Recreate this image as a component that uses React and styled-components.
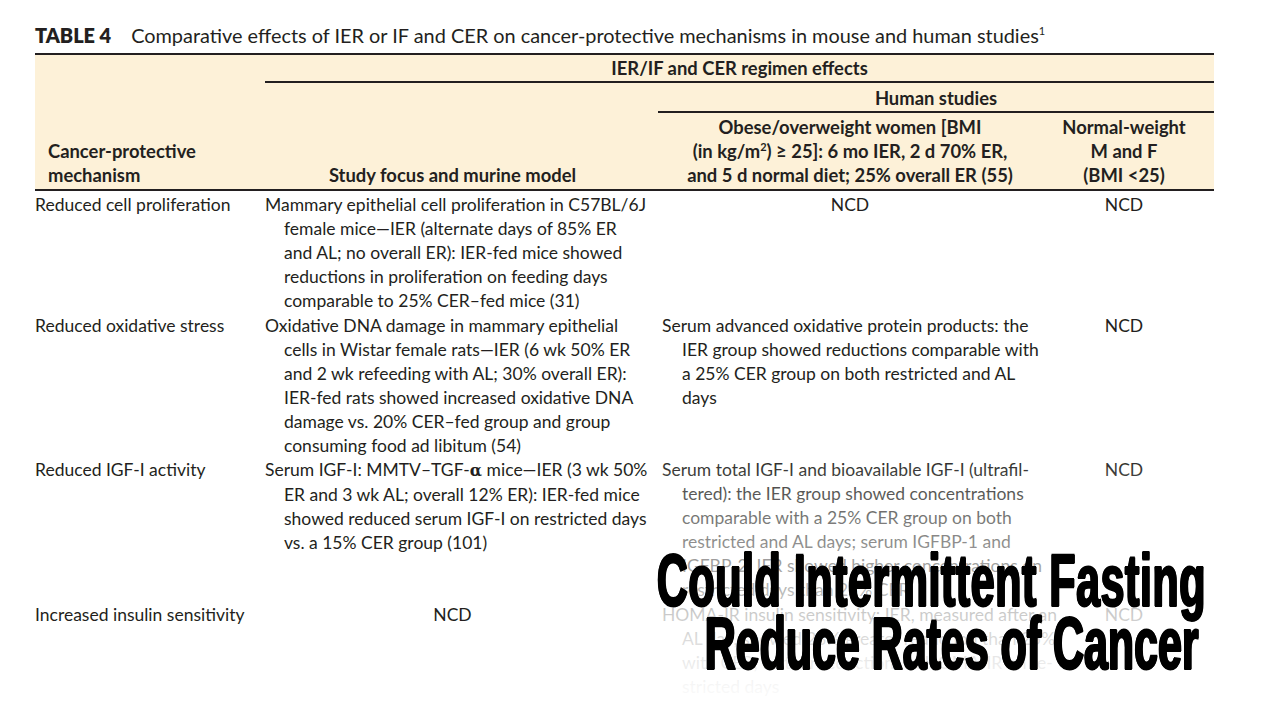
import React from 'react';
import styled, { createGlobalStyle } from 'styled-components';

const GlobalStyle = createGlobalStyle`
  html, body {
    margin: 0;
    padding: 0;
    background: #ffffff;
  }
  body {
    font-family: Lato, "Open Sans", sans-serif;
    color: #231f20;
  }
`;

const Page = styled.div`
  position: relative;
  width: 1280px;
  height: 720px;
  overflow: hidden;
  padding: 23px 0 0 35px;
  box-sizing: border-box;
`;

const Caption = styled.div`
  font-size: 19.9px;
  line-height: 24px;
  margin-bottom: 6px;
  white-space: nowrap;
`;

const CaptionLabel = styled.b`
  font-weight: 800;
  margin-right: 20px;
`;

const Sup = styled.sup`
  font-size: 11px;
  line-height: 0;
`;

const Table = styled.table`
  border-collapse: separate;
  border-spacing: 0;
  table-layout: fixed;
  width: 1179px;
  font-size: 17.5px;
  line-height: 24px;
`;

const HeadCell = styled.th`
  background: #fdf1d8;
  font-weight: 700;
  font-size: 18.4px;
  vertical-align: bottom;
  text-align: ${p => p.$align || 'center'};
  padding: ${p => p.$pad || '2px 2px 2px 0'};
  border-top: ${p => (p.$top ? '2px solid #231f20' : 'none')};
  border-bottom: ${p => (p.$bottom ? '2px solid #231f20' : 'none')};
  white-space: nowrap;
`;

const GroupLabel = styled.div`
  margin-left: ${p => p.$inset || 0}px;
  padding: ${p => p.$pad};
  border-bottom: 2px solid #231f20;
  text-align: center;
`;

const BodyCell = styled.td`
  vertical-align: top;
  text-align: ${p => p.$align || 'left'};
  padding: ${p => p.$pad || '0'};
`;

const Line = styled.span`
  display: block;
  white-space: nowrap;
  padding-left: ${p => (p.$indent ? p.$indent : 0)}px;
`;

const Alpha = styled.span`
  font-family: "DejaVu Serif", serif;
  font-weight: 700;
  font-size: 16px;
`;

const Veil = styled.div`
  position: absolute;
  left: 648px;
  right: 0;
  top: 450px;
  bottom: 0;
  background: linear-gradient(
    to bottom,
    rgba(255, 255, 255, 0) 0px,
    rgba(255, 255, 255, 0.4) 70px,
    rgba(255, 255, 255, 0.72) 150px,
    rgba(255, 255, 255, 0.9) 210px,
    rgba(255, 255, 255, 0.97) 240px
  );
`;

const Headline = styled.div`
  position: absolute;
  left: 631px;
  width: 600px;
  top: 549px;
`;

const HeadlineRow = styled.div`
  display: flex;
  justify-content: center;
  margin-left: ${p => p.$shift || 0}px;
  height: 63px;
`;

const HeadlineText = styled.span`
  display: inline-block;
  font-family: "Liberation Sans", Arial, sans-serif;
  font-weight: 700;
  font-size: 74px;
  line-height: 63px;
  color: #000;
  white-space: nowrap;
  letter-spacing: ${p => (p.$ls !== undefined ? p.$ls : 1)}px;
  -webkit-text-stroke: 2px #000;
  text-shadow: 1.6px 0 0 #000, -1.6px 0 0 #000;
  transform: scaleX(0.58);
  transform-origin: center;
`;

const rows = [
  {
    mech: 'Reduced cell proliferation',
    murine: [
      'Mammary epithelial cell proliferation in C57BL/6J',
      'female mice—IER (alternate days of 85% ER',
      'and AL; no overall ER): IER-fed mice showed',
      'reductions in proliferation on feeding days',
      'comparable to 25% CER–fed mice (31)',
    ],
    obese: null,
    top: 2,
  },
  {
    mech: 'Reduced oxidative stress',
    murine: [
      'Oxidative DNA damage in mammary epithelial',
      'cells in Wistar female rats—IER (6 wk 50% ER',
      'and 2 wk refeeding with AL; 30% overall ER):',
      'IER-fed rats showed increased oxidative DNA',
      'damage vs. 20% CER–fed group and group',
      'consuming food ad libitum (54)',
    ],
    obese: [
      'Serum advanced oxidative protein products: the',
      'IER group showed reductions comparable with',
      'a 25% CER group on both restricted and AL',
      'days',
    ],
    top: 1,
  },
  {
    mech: 'Reduced IGF-I activity',
    murine: [
      <>Serum IGF-I: MMTV–TGF-<Alpha>α</Alpha> mice—IER (3 wk 50%</>,
      'ER and 3 wk AL; overall 12% ER): IER-fed mice',
      'showed reduced serum IGF-I on restricted days',
      'vs. a 15% CER group (101)',
    ],
    obese: [
      'Serum total IGF-I and bioavailable IGF-I (ultrafil-',
      'tered): the IER group showed concentrations',
      'comparable with a 25% CER group on both',
      'restricted and AL days; serum IGFBP-1 and',
      'IGFBP-2: IER showed higher concentrations on',
      'restricted days than 25% CER',
    ],
    top: 0,
  },
  {
    mech: 'Increased insulin sensitivity',
    murine: null,
    obese: [
      'HOMA-IR insulin sensitivity: IER, measured after an',
      'AL day, showed 23% greater reduction than 25%',
      'with CER; further reductions in HOMA-IR on re-',
      'stricted days',
    ],
    top: 1,
  },
];

const Lines = ({ lines, indent }) =>
  lines.map((l, i) => (
    <Line key={i} $indent={i > 0 ? indent : 0}>
      {l}
    </Line>
  ));

export default function App() {
  return (
    <>
      <GlobalStyle />
      <Page>
        <Caption>
          <CaptionLabel>TABLE 4</CaptionLabel>
          Comparative effects of IER or IF and CER on cancer-protective mechanisms in mouse and human studies
          <Sup>1</Sup>
        </Caption>

        <Table>
          <colgroup>
            <col style={{ width: 230 }} />
            <col style={{ width: 375 }} />
            <col style={{ width: 400 }} />
            <col style={{ width: 174 }} />
          </colgroup>
          <thead>
            <tr>
              <HeadCell rowSpan={3} $top $bottom $align="left" $pad="0 0 2px 13px">
                Cancer-protective
                <br />
                mechanism
              </HeadCell>
              <HeadCell colSpan={3} $top $pad="0">
                <GroupLabel $pad="1px 0 1px 0">IER/IF and CER regimen effects</GroupLabel>
              </HeadCell>
            </tr>
            <tr>
              <HeadCell rowSpan={2} $bottom $pad="0 0 2px 0">
                Study focus and murine model
              </HeadCell>
              <HeadCell colSpan={2} $pad="0">
                <GroupLabel $inset={18} $pad="3px 0 1px 0">Human studies</GroupLabel>
              </HeadCell>
            </tr>
            <tr>
              <HeadCell $bottom $pad="2px 2px 2px 22px">
                Obese/overweight women [BMI
                <br />
                (in kg/m<Sup>2</Sup>) ≥ 25]: 6 mo IER, 2 d 70% ER,
                <br />
                and 5 d normal diet; 25% overall ER (55)
              </HeadCell>
              <HeadCell $bottom $pad="2px 6px 2px 0">
                Normal-weight
                <br />
                M and F
                <br />
                (BMI &lt;25)
              </HeadCell>
            </tr>
          </thead>
          <tbody>
            {rows.map((r, i) => (
              <tr key={i}>
                <BodyCell $pad={`${r.top}px 0 0 0`}>
                  <Line>{r.mech}</Line>
                </BodyCell>
                {r.murine ? (
                  <BodyCell $pad={`${r.top}px 0 0 0`}>
                    <Lines lines={r.murine} indent={19} />
                  </BodyCell>
                ) : (
                  <BodyCell $align="center" $pad={`${r.top}px 0 0 0`}>
                    NCD
                  </BodyCell>
                )}
                {r.obese ? (
                  <BodyCell $pad={`${r.top}px 2px 0 22px`}>
                    <Lines lines={r.obese} indent={20} />
                  </BodyCell>
                ) : (
                  <BodyCell $align="center" $pad={`${r.top}px 2px 0 22px`}>
                    NCD
                  </BodyCell>
                )}
                <BodyCell $align="center" $pad={`${r.top}px 6px 0 0`}>
                  NCD
                </BodyCell>
              </tr>
            ))}
          </tbody>
        </Table>

        <Veil />
        <Headline>
          <HeadlineRow>
            <HeadlineText>Could Intermittent Fasting</HeadlineText>
          </HeadlineRow>
          <HeadlineRow $shift={42}>
            <HeadlineText $ls={0}>Reduce Rates of Cancer</HeadlineText>
          </HeadlineRow>
        </Headline>
      </Page>
    </>
  );
}
